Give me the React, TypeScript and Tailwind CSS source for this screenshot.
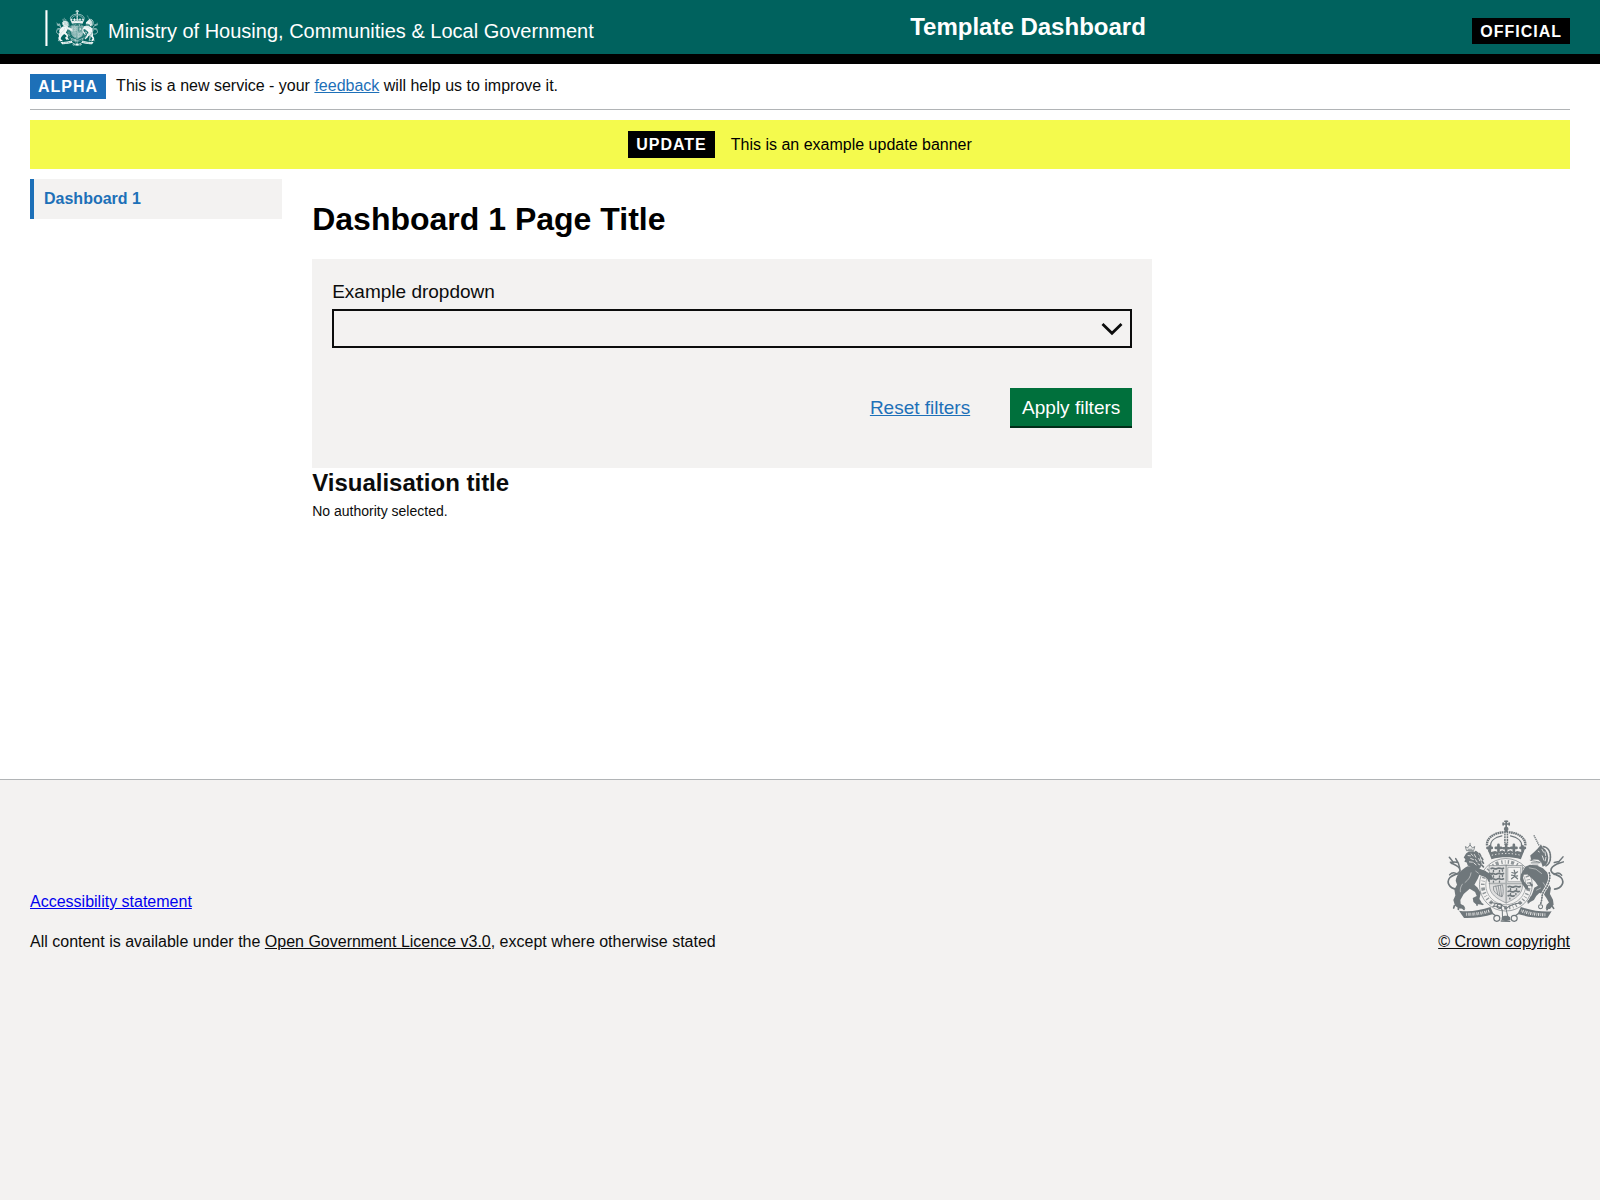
function Crest({ className }: { className: string }) {
  return (
    <svg className={className} viewBox="50 42 350 310" preserveAspectRatio="none" fill="none" stroke="currentColor" strokeLinecap="round" strokeLinejoin="round">
      {/* crown */}
      <path d="M227 45v19M218 54h18M223 46h8M218 51v6M236 51v6" strokeWidth="5" />
      <circle cx="227" cy="69" r="7" fill="currentColor" stroke="none" />
      <path d="M227 75v42" strokeWidth="12" strokeDasharray="6 2" strokeLinecap="butt" />
      <path d="M227 80v32" className="stroke-(--ground)" strokeWidth="3" />
      <path d="M219 79C190 80 166 98 170 120M235 79c29 1 53 19 49 41" strokeWidth="7" strokeDasharray="5 1.5" strokeLinecap="butt" />
      <path d="M214 90c-20 4-36 15-33 32M240 90c20 4 36 15 33 32" strokeWidth="4" />
      <path d="M204 117v19M196 126h16M250 117v19M242 126h16M227 116v20M219 127h16M178 121v15M171 126h13M276 121v15M270 126h13" strokeWidth="8" />
      <path d="M170 126l13 34c28-8 60-8 88 0l13-34-12 12-12-3-10 4-11-6-12 6-12-6-11 6-10-4-12 3z" fill="currentColor" stroke="none" />
      <path d="M184 148c28-7 58-7 86 0" className="stroke-(--ground)" strokeWidth="2.5" strokeDasharray="4 6" strokeLinecap="butt" />
      {/* garter and shield */}
      <circle cx="226" cy="237" r="79" strokeWidth="2.5" strokeOpacity=".8" />
      <circle cx="226" cy="237" r="69" strokeWidth="11" strokeOpacity=".75" strokeDasharray="4 6 9 8 4 7 2 7" strokeLinecap="butt" />
      <circle cx="226" cy="237" r="60" strokeWidth="2" strokeOpacity=".8" />
      <path d="M177 179h99v60c0 27-22 40-49 53-27-13-50-26-50-53z" className="fill-(--ground)" stroke="none" />
      <path d="M177 179h99v60c0 27-22 40-49 53-27-13-50-26-50-53z" fill="currentColor" fillOpacity=".16" strokeWidth="2.5" strokeOpacity=".65" />
      <path d="M227 179v112M177 233h99" strokeWidth="5" strokeOpacity=".45" />
      <path d="M182 188c7-5 10 5 18 0s10 4 19-1M182 204c7-5 10 5 18 0s10 4 19-1M182 220c7-5 10 5 18 0s10 4 19-1" strokeWidth="5" />
      <path d="M189 194v4M207 194v4M189 210v4M207 210v4M189 226v3M207 226v3M216 192v4M216 208v4" strokeWidth="4" />
      <path d="M233 243c7-5 10 5 18 0s9 4 18-1M233 257c7-5 10 5 18 0s7 3 15 0M233 270c7-5 10 5 18 0" strokeWidth="5" />
      <path d="M240 249v4M258 249v4M240 263v4M256 263v4M238 277v3" strokeWidth="4" />
      <path d="M233 185h37v42h-37z" className="fill-(--ground)" strokeWidth="2" strokeOpacity=".6" />
      <path d="M251 193l3 10 7-5M254 203l-10-3M254 203l-2 9 9-2M252 212l-9 7M253 212l8 7M243 208l7 1" strokeWidth="3.5" />
      <path d="M190 242c8-2 17-2 26-5 3 15 3 27-1 36-11-2-21-11-25-19zM196 241l6 25M203 240l5 30M210 239l3 32" strokeWidth="2" />
      {/* lion */}
      <path d="M108 133l-3-11 7 4 7-9 7 9 7-4-3 11zM113 130h12M119 117v-5" strokeWidth="2.5" />
      <path d="M107 143l8-6 13-1 12 4 8 10 2 12 4 12-4 12-12 3-16-5-10-5-3-9-7-2 3-8-5-5z" fill="currentColor" stroke="none" />
      <path d="M136 137l6 5M147 143l4 8M153 155l4 6M155 166l4 6M154 178l5 5" strokeWidth="5" />
      <path d="M113 149l7 1M122 144l6 6M132 146l4 8M121 158l8 3M135 161l5 7M117 168l9 1M130 171l7 6M145 158l3 7M143 174l5 3" className="stroke-(--ground)" strokeWidth="2.5" />
      <path d="M112 181c-16 8-34 24-36 44l4 12-8 14 3 18-6 14 5 17 12 8 19 1-4-9-10-5-1-12 10-18 18-16 16 10 5 12-12 6 2 12 7 6 20 2-4-10-5-7 4-18-10-17-9-8 10-18 5-12 18 7 9 9 8-3 3-10-13-10-20-8-10-9z" fill="currentColor" stroke="none" />
      <path d="M150 193l14 4 13 12M178 202l7 3M181 213l4 4M174 222l2 4M72 300l-2 7M84 306v5M97 307l4 4M139 293l1 5M152 293l5 3" strokeWidth="5" />
      <path d="M122 201c-2 13-8 21-18 29M96 235c-6 9-7 16-6 23M136 196l8 6" className="stroke-(--ground)" strokeWidth="1.5" />
      <path d="M78 250c-22-2-31-22-19-35 12-12 28-8 30-21 1-12-15-17-26-22" strokeWidth="5" />
      <path d="M57 154l11 14 14 2M70 170l-10-1M76 158l8 14 4 14M58 207c8-9 16-7 22-2" strokeWidth="4.5" />
      {/* unicorn */}
      <path d="M310 88l16 32" strokeWidth="4" strokeDasharray="4 2" strokeLinecap="butt" />
      <path d="M299 149l11-10 10-10 7-8 4-6 5 10 8 6 6 10 3 14-2 14-6 9-9 5-4-13-9-8-13-1-8 2z" fill="currentColor" stroke="none" />
      <path d="M299 163c10 4 20 2 30 7M302 171h24M306 178h16" strokeWidth="2.5" />
      <path d="M338 122c16 2 23 18 21 36 0 10-6 18-13 22" strokeWidth="5" strokeDasharray="5 3" />
      <path d="M323 136l3 2M334 130l5 9M343 138l2 11M346 154l-2 11M335 150l5 13" className="stroke-(--ground)" strokeWidth="2.5" />
      <path d="M284 183l14-6 21 2 18 8 13 13 4 15-2 16 9 16-3 18 9 17 2 15-11 13-13-1 3-12 7-7-8-14-8-11-13-3-9 9-7 12-11 6-7 6-2-9 8-7 8-18 5-15 11-6-8-12-12-12-11-10-12 1-2 8 4 12 11 14 2 10-8 0-10-15-7-15 2-15z" fill="currentColor" stroke="none" />
      <path d="M296 186l20 4 17 13M338 231l10 16M330 247l-12 6" className="stroke-(--ground)" strokeWidth="1.5" />
      <path d="M299 232l5 8M302 273l-4 8M365 302l4 6M352 307l-3 5" strokeWidth="5" />
      <path d="M372 250c22-2 31-22 19-35-12-12-28-8-30-21-1-12 12-17 22-22" strokeWidth="5" />
      <path d="M397 153l-12 14-14 3M398 168l-15 5M393 208c-8-9-16-7-22-2" strokeWidth="4.5" />
      <path d="M356 201c7 20-8 44-17 57-7 11-3 22-9 36" className="stroke-(--ground)" strokeWidth="9" />
      <path d="M356 201c7 20-8 44-17 57-7 11-3 22-9 36" strokeWidth="5" strokeDasharray="1 7" />
      <path d="M356 201c7 20-8 44-17 57-7 11-3 22-9 36" strokeWidth="2" />
      <circle cx="330" cy="303" r="6" className="fill-(--ground)" strokeWidth="3" />
      {/* garter buckle, motto ribbon and plinth */}
      <path d="M180 290c16 2 32 4 43 14 8 10 5 22 10 30M272 292c-14 1-32 4-44 16M187 302c14-2 24 2 28 11 2 10-1 16 2 24" strokeWidth="3" />
      <circle cx="207" cy="301" r="7" strokeWidth="3" />
      <path d="M86 315c30 4 62 0 94-11l9 21c-28 8-56 13-88 12l-7-10zM363 317c-28 2-60-2-92-13l-10 21c28 8 56 13 90 11z" fill="currentColor" stroke="none" />
      <path d="M108 326c26 0 50-3 70-11M344 327c-26 0-50-4-72-12" className="stroke-(--ground)" strokeWidth="9" strokeDasharray="2 4 3 3" strokeLinecap="butt" />
      <circle cx="199" cy="338" r="9" className="fill-(--ground)" strokeWidth="3.5" />
      <circle cx="251" cy="338" r="9" className="fill-(--ground)" strokeWidth="3.5" />
      <path d="M187 324l9 6M263 324l-9 6M212 346l26 1" strokeWidth="4" />
      <path d="M214 334c6-5 18-5 24 0l2 9-14 4-13-4z" fill="currentColor" stroke="none" />
    </svg>
  );
}

export default function App() {
  return (
    <div className="flex h-[1200px] flex-col overflow-hidden bg-white font-['Liberation_Sans',Arial,sans-serif] text-base leading-5 text-[#0b0c0c]">
      <header className="flex h-16 items-start justify-between border-b-10 border-black bg-[#00625e] px-[30px] text-white">
        <div className="mt-[10px] ml-[15px] flex h-9 w-[850.2px]">
          <svg className="h-9 w-[3px]" viewBox="0 0 3 36" fill="white">
            <path d="M.4 .2h2.1v35.8H.4z" />
          </svg>
          <Crest className="ml-2 h-9 w-[42px] text-[#f0f6f6] [--ground:#4d918e]" />
          <span className="ml-[10px] pt-[10px] text-[20px] leading-[22px]">Ministry of Housing, Communities &amp; Local Government</span>
        </div>
        <h1 className="mt-3 mr-auto ml-[15px] text-2xl leading-[30px] font-bold">Template Dashboard</h1>
        <strong className="mt-[18px] h-[26px] bg-black px-2 pt-1 tracking-[1px]">OFFICIAL</strong>
      </header>

      <div className="mx-[30px] flex h-[46px] shrink-0 border-b border-[#b1b4b6] pt-[10px]">
        <strong className="h-[25px] bg-[#1d70b8] px-2 pt-[3px] tracking-[1px] text-white">ALPHA</strong>
        <span className="ml-[10px] pt-[2px]">
          This is a new service - your <a href="#" className="text-[#1d70b8] underline">feedback</a> will help us to improve it.
        </span>
      </div>

      <div className="mx-[30px] mt-[10px] flex h-[49px] shrink-0 items-center justify-center bg-[#f4fa4d] text-black">
        <strong className="h-[27px] bg-black px-2 pt-1 tracking-[1px] text-white">UPDATE</strong>
        <span className="ml-4">This is an example update banner</span>
      </div>

      <div className="mx-[30px] mt-[10px] flex h-[600px] shrink-0 gap-[30px]">
        <nav className="w-[252.2px]">
          <a href="#" className="flex h-10 items-center border-l-4 border-[#1d70b8] bg-[#f3f2f1] pl-[10px] font-bold text-[#1d70b8]">Dashboard 1</a>
        </nav>
        <main className="w-[840px]">
          <h2 className="pt-[23px] text-[32px] leading-[35px] font-bold text-black">Dashboard 1 Page Title</h2>
          <section className="mt-[22px] h-[209px] bg-[#f3f2f1] px-5 pt-5 text-[19px] leading-[25px]">
            <label>Example dropdown</label>
            <div className="mt-[5px] flex h-[39px] items-center justify-end border-2 border-[#0b0c0c] pr-[7px]">
              <svg className="h-[14px] w-[22px]" viewBox="0 0 22 14" fill="none" stroke="#0b0c0c" strokeWidth="2.8">
                <path d="M1.5 2 11 11.2 20.5 2" />
              </svg>
            </div>
            <div className="mt-10 flex items-start justify-end gap-10">
              <a href="#" className="pt-[7px] text-[#1d70b8] underline">Reset filters</a>
              <button className="h-[38px] w-[122px] bg-[#00703c] text-white shadow-[0_2px_0_#002d18]">Apply filters</button>
            </div>
          </section>
          <h3 className="text-2xl leading-[30px] font-bold">Visualisation title</h3>
          <p className="mt-1 text-sm leading-[18px]">No authority selected.</p>
        </main>
      </div>

      <footer className="flex flex-1 items-start justify-between border-t border-[#b1b4b6] bg-[#f3f2f1] px-[30px]">
        <div className="pt-28">
          <a href="#" className="block text-[#0000ee] underline">Accessibility statement</a>
          <p className="mt-5">
            All content is available under the <a href="#" className="underline">Open Government Licence v3.0</a>, except where otherwise stated
          </p>
        </div>
        <div className="flex flex-col items-end pt-10">
          <Crest className="mr-[6.5px] h-[103px] w-[117px] text-[#6f777b] [--ground:#f3f2f1]" />
          <a href="#" className="mt-[9px] underline">© Crown copyright</a>
        </div>
      </footer>
    </div>
  );
}
